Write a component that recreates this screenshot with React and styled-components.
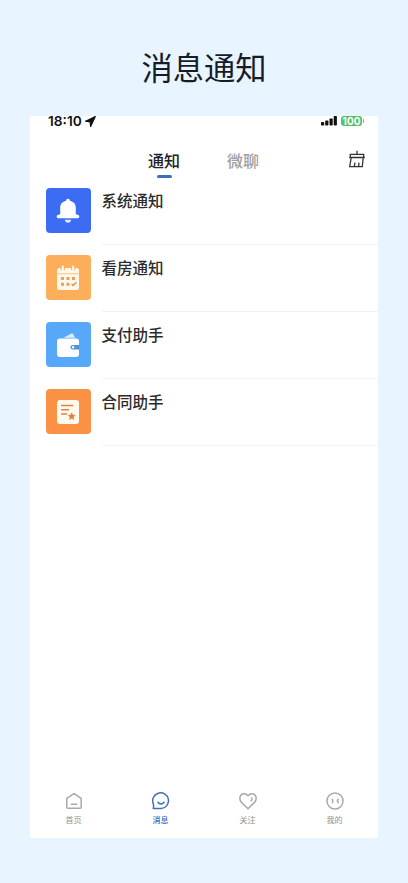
import React from 'react';
import styled, { createGlobalStyle } from 'styled-components';

const GlobalStyle = createGlobalStyle`
    * {
        box-sizing: border-box;
    }

    body {
        margin: 0;
        background: #e8f4ff;
        font-family: "Noto Sans CJK SC", sans-serif;
    }
`

const messages = [
    { title: '系统通知', color: '#3c6cf4', icon: BellIcon },
    { title: '看房通知', color: '#fcae5a', icon: CalendarIcon },
    { title: '支付助手', color: '#58a8fa', icon: WalletIcon },
    { title: '合同助手', color: '#fb9145', icon: ContractIcon },
];

const navItems = [
    { label: '首页', icon: HomeIcon },
    { label: '消息', icon: ChatIcon, active: true },
    { label: '关注', icon: HeartIcon },
    { label: '我的', icon: FaceIcon },
];

export default function App () {
    return (
        <Page>
            <GlobalStyle />
            <PageTitle>消息通知</PageTitle>
            <Phone>
                <StatusBar>
                    <StatusGroup>
                        <Time>18:10</Time>
                        <LocationArrow />
                    </StatusGroup>
                    <StatusGroup>
                        <SignalBars />
                        <Battery>
                            <BatteryLevel>100</BatteryLevel>
                            <BatteryCap />
                        </Battery>
                    </StatusGroup>
                </StatusBar>
                <Header>
                    <Tab $active>通知</Tab>
                    <Tab>微聊</Tab>
                    <ClearButton aria-label="清除">
                        <BroomIcon />
                    </ClearButton>
                </Header>
                <MessageList>
                    {messages.map(({ title, color, icon: Icon }) => (
                        <MessageRow key={title}>
                            <IconTile $color={color}>
                                <Icon />
                            </IconTile>
                            <MessageBody>
                                <MessageTitle>{title}</MessageTitle>
                            </MessageBody>
                        </MessageRow>
                    ))}
                </MessageList>
                <BottomNav>
                    {navItems.map(({ label, icon: Icon, active }) => (
                        <NavItem key={label} $active={active}>
                            <Icon />
                            <NavLabel $active={active}>{label}</NavLabel>
                        </NavItem>
                    ))}
                </BottomNav>
            </Phone>
        </Page>
    )
}

function LocationArrow () {
    return (
        <svg width="11" height="11" viewBox="0 0 11 11">
            <path d="M10.300.6.6 5.200l4.500.6.5 4.600z" fill="#111" stroke="#111" strokeWidth="1.200" strokeLinejoin="round" />
        </svg>
    )
}

function SignalBars () {
    return (
        <svg width="16" height="10" viewBox="0 0 16 10" fill="#111">
            <rect x="0" y="6" width="3.200" height="3.600" rx=".8" />
            <rect x="4.200" y="4.400" width="3.200" height="5.200" rx=".8" />
            <rect x="8.500" y="2.400" width="3.200" height="7.200" rx=".8" />
            <rect x="12.700" y="0" width="3.200" height="9.600" rx=".8" />
        </svg>
    )
}

// handle, flared head, then the bristles
function BroomIcon () {
    return (
        <svg width="18" height="18" viewBox="0 0 18 18" fill="none" stroke="#333" strokeWidth="1.300">
            <path d="M9 .8v3.400M2.300 7.500V4.300h13.400v3.200M1.200 7.500h15.600M3.200 7.500 1.700 16.600h12.600L15.200 7.500M6.400 16.400l.5-3.800M10.600 16.400l.4-3.800" />
        </svg>
    )
}

function BellIcon () {
    return (
        <svg width="24" height="26" viewBox="0 0 24 26" fill="#fff">
            <path d="M12 .8c1.200 0 1.900.8 1.900 1.900 3.900.9 5.900 3.600 5.900 7v6.600l2.500.8c1.500.5 1.300 3.100-.4 3.100H2.100c-1.700 0-1.900-2.600-.4-3.100l2.500-.8V9.700c0-3.400 2-6.100 5.900-7C10.100 1.600 10.800.8 12 .8z" />
            <path d="M8.800 21.800h6.400c-.3 2-1.500 3-3.200 3s-2.900-1-3.200-3z" fillOpacity=".85" />
        </svg>
    )
}

function CalendarIcon () {
    return (
        <svg width="24" height="26" viewBox="0 0 24 26">
            <rect x="1" y="3" width="22" height="22" rx="2.500" fill="#fff7e8" />
            <path d="M1 8.800h22" stroke="#fcc489" strokeWidth="1" />
            <path d="M6.800 1.300v4M17.200 1.300v4" stroke="#fcae5a" strokeWidth="4" />
            <path d="M6.800 1.600v3.800M17.200 1.600v3.800" stroke="#fff7e8" strokeWidth="2.200" strokeLinecap="round" />
            <path d="M5 12h3v3H5zM10.500 12h3v3h-3zM16 12h3v3h-3zM5 17.700h3v3H5zM10.500 17.700h3v3h-3z" fill="#dfa366" />
            <path d="m15.600 18.800 1.600 1.700 3.200-3.300" fill="none" stroke="#d9944e" strokeWidth="1.300" />
        </svg>
    )
}

function WalletIcon () {
    return (
        <svg width="24" height="26" viewBox="0 0 24 26">
            <path d="m7.500 5.800 7.800-4.300c.7-.4 1.300-.2 1.700.5l2.200 3.800z" fill="#d9edff" />
            <rect x="1" y="6.500" width="22" height="18.500" rx="3" fill="#fff" />
            <path d="M23.200 13h-6.500a2.300 2.300 0 0 0 0 4.600h6.500z" fill="#4a93df" />
            <circle cx="17" cy="15.300" r="1.200" fill="#fff" />
        </svg>
    )
}

function ContractIcon () {
    return (
        <svg width="24" height="26" viewBox="0 0 24 26">
            <rect x="1" y="1" width="22" height="24" rx="3" fill="#fff9f0" />
            <path d="M5.500 6.500h11.200M5.500 10.700h7M5.500 15h5" stroke="#df8240" strokeWidth="1.500" strokeLinecap="round" />
            <path d="m15.700 13.800 1 2.300 2.500.2-1.900 1.700.6 2.500-2.200-1.300-2.200 1.300.6-2.500-1.900-1.700 2.500-.2z" fill="#df8240" stroke="#df8240" strokeWidth=".6" strokeLinejoin="round" />
        </svg>
    )
}

function HomeIcon () {
    return (
        <NavSvg viewBox="0 0 18 18">
            <path d="M1.800 6.300 9 1.600l7.200 4.700v9c0 .6-.4 1-1 1H2.800c-.6 0-1-.4-1-1zM6.300 12.200h5.400" />
        </NavSvg>
    )
}

function ChatIcon () {
    return (
        <NavSvg viewBox="0 0 18 18">
            <path d="M1.200 16.600c.7-1.200.4-3 .2-4.600A7.900 7.900 0 1 1 9 16.600zM6 10.200c1.300 2.500 4.700 2.500 6 0" />
        </NavSvg>
    )
}

function HeartIcon () {
    return (
        <NavSvg viewBox="0 0 18 18">
            <path d="M9 16.700 2.500 10.400C-.8 6.500 1.400 1.700 5 1.700c1.700 0 3.100.8 4 2 .9-1.200 2.300-2 4-2 3.600 0 5.800 4.800 2.500 8.700z" />
            <path d="M12.800 6c.6.700.3 1.900-.7 2.700" />
        </NavSvg>
    )
}

function FaceIcon () {
    return (
        <NavSvg viewBox="0 0 18 18">
            <circle cx="9" cy="9" r="8" />
            <path d="M6.400 7.300c.5 1 .5 2.300 0 3.300M12.200 7.300c-.9 1-.9 2.300 0 3.300" />
        </NavSvg>
    )
}

const Page = styled.div`
    width: 408px;
    height: 883px;
    padding: 0 30px;
    display: flex;
    flex-direction: column;
    background: #e8f4ff;
`

const PageTitle = styled.h1`
    margin: 0;
    height: 116px;
    padding-top: 44px;
    font-size: 31.3px;
    font-weight: 400;
    line-height: 46px;
    text-align: center;
    color: #161c28;
`

const Phone = styled.div`
    height: 722px;
    display: flex;
    flex-direction: column;
    background: #fff;
`

const StatusBar = styled.div`
    height: 10px;
    padding: 0 14px 0 18px;
    display: flex;
    justify-content: space-between;
    align-items: center;
`

const StatusGroup = styled.div`
    display: flex;
    align-items: center;
    gap: 4px;
`

const Time = styled.span`
    margin-right: -1px;
    font-family: Inter, sans-serif;
    font-size: 13.7px;
    font-weight: 600;
    line-height: 10px;
    color: #111;
`

const Battery = styled.div`
    display: flex;
    align-items: center;
    gap: 1px;
`

const BatteryLevel = styled.span`
    width: 21px;
    height: 10px;
    border-radius: 3px;
    background: #54c26d;
    color: #fff;
    font-family: Inter, sans-serif;
    font-size: 10px;
    font-weight: 700;
    line-height: 10px;
    text-align: center;
`

const BatteryCap = styled.span`
    width: 1px;
    height: 4px;
    border-radius: 0 1px 1px 0;
    background: #54c26d;
`

const Header = styled.div`
    height: 62px;
    padding: 21px 12px 0 118px;
    display: flex;
    align-items: flex-start;
    gap: 47px;
`

const Tab = styled.div`
    height: 31px;
    display: flex;
    flex-direction: column;
    align-items: center;
    justify-content: space-between;
    font-size: 16px;
    font-weight: 500;
    line-height: 26px;
    color: ${props => props.$active ? '#222' : '#a0a0a0'};

    &::after {
        content: '';
        flex: none;
        width: 15px;
        height: 3px;
        border-radius: 2px;
        background: ${props => props.$active ? '#3a6fbe' : 'transparent'};
    }
`

const ClearButton = styled.button`
    margin: 3px 0 0 auto;
    padding: 0;
    border: 0;
    display: flex;
    background: none;
`

const MessageList = styled.div`
    flex: 1;
`

const MessageRow = styled.div`
    height: 67px;
    padding-left: 15.5px;
    display: flex;
    gap: 11px;
`

const IconTile = styled.div`
    width: 45px;
    height: 45px;
    display: flex;
    align-items: center;
    justify-content: center;
    border-radius: 4px;
    background: ${props => props.$color};
`

const MessageBody = styled.div`
    flex: 1;
    height: 57px;
    border-bottom: 1px solid #f3f3f3;
`

const MessageTitle = styled.div`
    font-size: 15.5px;
    font-weight: 500;
    line-height: 24px;
    color: #2b2b2b;
`

const BottomNav = styled.div`
    height: 46px;
    display: grid;
    grid-template-columns: repeat(4, 1fr);
`

const NavItem = styled.div`
    display: flex;
    flex-direction: column;
    align-items: center;
    gap: 4px;
    color: ${props => props.$active ? '#3e6fb5' : '#a9a9a9'};
`

const NavSvg = styled.svg`
    width: 18px;
    height: 18px;
    fill: none;
    stroke: currentColor;
    stroke-width: 1.5;
    stroke-linecap: round;
    stroke-linejoin: round;
`

const NavLabel = styled.span`
    font-size: 8px;
    font-weight: ${props => props.$active ? 500 : 400};
    line-height: 12px;
    color: ${props => props.$active ? '#3e6fb5' : '#8f8f8f'};
`
